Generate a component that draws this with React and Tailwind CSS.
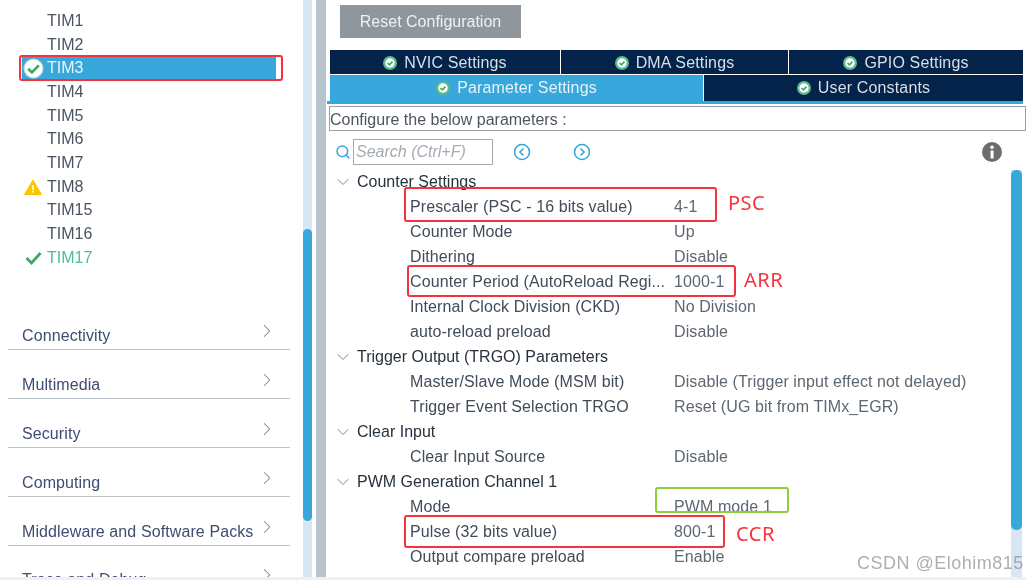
import { ChevronRight, ChevronDown, Search } from 'lucide-react';

const timers = [
  { name: 'TIM1' },
  { name: 'TIM2' },
  { name: 'TIM3', state: 'selected' },
  { name: 'TIM4' },
  { name: 'TIM5' },
  { name: 'TIM6' },
  { name: 'TIM7' },
  { name: 'TIM8', state: 'warning' },
  { name: 'TIM15' },
  { name: 'TIM16' },
  { name: 'TIM17', state: 'ok' },
];

const categories = ['Connectivity', 'Multimedia', 'Security', 'Computing', 'Middleware and Software Packs'];

const params = [
  { head: 'Counter Settings' },
  { label: 'Prescaler (PSC - 16 bits value)', value: '4-1' },
  { label: 'Counter Mode', value: 'Up' },
  { label: 'Dithering', value: 'Disable' },
  { label: 'Counter Period (AutoReload Regi...', value: '1000-1' },
  { label: 'Internal Clock Division (CKD)', value: 'No Division' },
  { label: 'auto-reload preload', value: 'Disable' },
  { head: 'Trigger Output (TRGO) Parameters' },
  { label: 'Master/Slave Mode (MSM bit)', value: 'Disable (Trigger input effect not delayed)' },
  { label: 'Trigger Event Selection TRGO', value: 'Reset (UG bit from TIMx_EGR)' },
  { head: 'Clear Input' },
  { label: 'Clear Input Source', value: 'Disable' },
  { head: 'PWM Generation Channel 1' },
  { label: 'Mode', value: 'PWM mode 1' },
  { label: 'Pulse (32 bits value)', value: '800-1' },
  { label: 'Output compare preload', value: 'Enable' },
];

const CheckBadge = ({ className }) => (
  <svg className={className} viewBox="0 0 20 20">
    <circle cx="10" cy="10" r="9.5" fill="#fff" />
    <circle cx="10" cy="10" r="9" fill="none" stroke="#3da86a" strokeWidth="1" opacity="0.4" />
    <path d="M5 10.2l3.5 3.5L15 7" fill="none" stroke="#3da86a" strokeWidth="2.6" />
  </svg>
);

const TabCheck = () => (
  <svg className="w-[14px] h-[14px] shrink-0" viewBox="0 0 20 20">
    <circle cx="10" cy="10" r="10" fill="#5bb98a" />
    <circle cx="10" cy="10" r="6.8" fill="#fff" />
    <path d="M6.5 10l2.6 2.6L13.6 8" fill="none" stroke="#3da86a" strokeWidth="2.4" />
  </svg>
);

const Tab = ({ label, active, className }) => (
  <div className={`flex items-center justify-center gap-[7px] text-[16px] tracking-[0.15px] ${active ? 'bg-[#38a7dc] text-[#e6f3fa]' : 'bg-[#03234b] text-[#d9dfe6]'} ${className}`}>
    <TabCheck />
    <span>{label}</span>
  </div>
);

const RoundArrow = ({ dir }) => (
  <svg className="w-[18px] h-[18px]" viewBox="0 0 18 18">
    <circle cx="9" cy="9" r="7.5" fill="none" stroke="#38a7dc" strokeWidth="1.6" />
    <path d={dir === 'left' ? 'M10.5 5.5L7 9l3.5 3.5' : 'M7.5 5.5L11 9l-3.5 3.5'} fill="none" stroke="#38a7dc" strokeWidth="1.6" />
  </svg>
);

const Sidebar = () => (
  <aside className="w-[303px] shrink-0 flex flex-col">
    <div className="h-[3px] overflow-hidden flex items-end pl-[47px] text-[16px] text-[#a9b0b8] leading-none">
      <span>WWDG</span>
    </div>
    <div className="mt-[9px] flex flex-col">
      {timers.map((t) => (
        <div key={t.name} className="h-[23.7px] flex items-center text-[16px]">
          {t.state === 'selected' ? (
            <div className="ml-[22px] w-[254px] h-[23px] bg-[#38a7dc] flex items-center text-[#eaf5fb]">
              <CheckBadge className="w-[21px] h-[21px] ml-[1px] shrink-0" />
              <span className="ml-[3px]">{t.name}</span>
            </div>
          ) : (
            <>
              <div className="w-[47px] shrink-0 flex justify-end pr-[5px]">
                {t.state === 'warning' && (
                  <svg className="w-[18px] h-[16px]" viewBox="0 0 18 16">
                    <path d="M9 1L17.5 15.5H.5z" fill="#fbc600" stroke="#fbc600" strokeLinejoin="round" />
                    <rect x="8.2" y="6" width="1.6" height="5" fill="#fff" />
                    <rect x="8.2" y="12" width="1.6" height="1.6" fill="#fff" />
                  </svg>
                )}
                {t.state === 'ok' && (
                  <svg className="w-[17px] h-[14px]" viewBox="0 0 17 14">
                    <path d="M1.5 7l5 5L15.5 2" fill="none" stroke="#3da86a" strokeWidth="2.8" />
                  </svg>
                )}
              </div>
              <span className={t.state === 'ok' ? 'text-[#4fbf92]' : 'text-[#4a5461]'}>{t.name}</span>
            </>
          )}
        </div>
      ))}
    </div>
    <div className="mt-[32px] pl-[8px] pr-[13px] flex flex-col">
      {categories.map((c) => (
        <div key={c} className="h-[48.8px] border-b border-[#b9c4cc] flex items-end justify-between pl-[14px] pr-[12px] pb-[1px] text-[16px] tracking-[0.1px] text-[#3f4d72] whitespace-nowrap">
          <span>{c}</span>
          <ChevronRight className="w-[22px] h-[22px] mb-[6px] ml-[-10px] shrink-0 text-[#7d868e]" strokeWidth={1.1} />
        </div>
      ))}
      <div className="h-[49px] flex items-end justify-between pl-[14px] pr-[12px] pb-[3px] text-[16px] tracking-[0.1px] text-[#3f4d72]">
        <span>Trace and Debug</span>
        <ChevronRight className="w-[22px] h-[22px] mb-[6px] shrink-0 text-[#7d868e]" strokeWidth={1.1} />
      </div>
    </div>
  </aside>
);

const ParamRow = ({ row }) =>
  row.head ? (
    <div className="h-[25px] flex items-center text-[16px] text-[#27323d]">
      <ChevronDown className="w-[20px] h-[20px] ml-[6px] mr-[4px] shrink-0 text-[#7d868e]" strokeWidth={1.2} />
      <span>{row.head}</span>
    </div>
  ) : (
    <div className="h-[25px] flex items-center text-[16px] tracking-[0.1px] whitespace-nowrap">
      <span className="w-[264px] ml-[83px] shrink-0 text-[#414c58]">{row.label}</span>
      <span className="text-[#5d6772]">{row.value}</span>
    </div>
  );

export default function App() {
  return (
    <div className="relative w-[1026px] h-[580px] overflow-hidden bg-white flex font-['Liberation_Sans',Arial,sans-serif] blur-[0.35px]">
      <Sidebar />

      {/* sidebar scrollbar */}
      <div className="w-[9px] h-full shrink-0 bg-[#d6e6f5]">
        <div className="h-[229px]" />
        <div className="h-[292px] bg-[#38a7dc] rounded-[5px]" />
      </div>
      <div className="w-[4px] shrink-0" />
      <div className="w-[10px] h-full shrink-0 bg-[#b8c4cc]" />

      <main className="flex-1 min-w-0 pt-[5px] pl-[1px] pr-[3px] flex flex-col">
        <div className="h-[33px] w-[181px] ml-[13px] pt-[1px] bg-[#8f979c] text-[#eef1f3] text-[16px] flex items-center justify-center">
          Reset Configuration
        </div>

        <div className="mt-[12px] ml-[3px] flex flex-col">
          <div className="h-[24px] flex gap-[1px]">
            <Tab label="NVIC Settings" className="w-[230px] pt-[2px]" />
            <Tab label="DMA Settings" className="w-[227px] pt-[2px]" />
            <Tab label="GPIO Settings" className="flex-1 pt-[2px]" />
          </div>
          <div className="h-[26px] mt-[1px] flex gap-[1px]">
            <Tab label="Parameter Settings" active className="w-[373px]" />
            <Tab label="User Constants" className="flex-1" />
          </div>
        </div>
        <div className="h-[4px] bg-[#38a7dc]" />

        <div className="mt-[2px] mr-[-3px] ml-[2px] h-[25px] pt-[2px] border border-[#9aa1a7] flex items-center text-[16px] text-[#4d5560]">
          Configure the below parameters :
        </div>

        <div className="h-[32px] mt-[5px] flex items-center">
          <Search className="w-[16px] h-[16px] ml-[8px] text-[#38a7dc]" strokeWidth={2.2} />
          <div className="ml-[2px] w-[140px] h-[26px] border border-[#a3a9ae] flex items-center pl-[2px] text-[16px] italic text-[#a4abb2]">
            Search (Ctrl+F)
          </div>
          <div className="ml-[20px]">
            <RoundArrow dir="left" />
          </div>
          <div className="ml-[42px]">
            <RoundArrow dir="right" />
          </div>
          <svg className="w-[20px] h-[20px] ml-[391px]" viewBox="0 0 20 20">
            <circle cx="10" cy="10" r="10" fill="#6b6e70" />
            <rect x="8.6" y="8.5" width="3" height="8" fill="#fff" />
            <circle cx="10" cy="5.2" r="1.8" fill="#fff" />
          </svg>
        </div>

        <div className="mt-[1px] flex">
          <div className="flex-1 min-w-0 flex flex-col">
            {params.map((row) => (
              <ParamRow key={row.head || row.label} row={row} />
            ))}
          </div>
          <div className="w-[11px] mt-[1px] mr-[1px] shrink-0 h-[410px] bg-[#d6e6f5]">
            <div className="h-[360px] bg-[#38a7dc] rounded-[5px]" />
          </div>
        </div>
      </main>

      {/* annotations drawn over the screenshot */}
      <div className="absolute left-[19px] top-[55px] w-[264px] h-[26px] border-2 border-[#f5333f] rounded-[3px]" />
      <div className="absolute left-[404px] top-[187px] w-[313px] h-[35px] border-2 border-[#f5333f] rounded-[3px]" />
      <div className="absolute left-[407px] top-[265px] w-[329px] h-[32px] border-2 border-[#f5333f] rounded-[3px]" />
      <div className="absolute left-[404px] top-[515px] w-[321px] h-[33px] border-2 border-[#f5333f] rounded-[3px]" />
      <div className="absolute left-[655px] top-[487px] w-[134px] h-[26px] border-2 border-[#8fcf3c] rounded-[3px]" />
      <span className="absolute left-[728px] top-[190px] text-[20px] leading-[26px] tracking-[0.5px] text-[#f5333f] font-['Noto_Sans',sans-serif]">PSC</span>
      <span className="absolute left-[744px] top-[267px] text-[20px] leading-[26px] tracking-[0.5px] text-[#f5333f] font-['Noto_Sans',sans-serif]">ARR</span>
      <span className="absolute left-[736px] top-[521px] text-[20px] leading-[26px] tracking-[0.5px] text-[#f5333f] font-['Noto_Sans',sans-serif]">CCR</span>
      <span className="absolute left-[857px] top-[552px] text-[18px] leading-[22px] tracking-[0.5px] text-[#8d8d8d]/70">CSDN @Elohim815</span>
      <div className="absolute left-0 right-0 bottom-0 h-[3px] bg-[#eef0f2]" />
    </div>
  );
}
